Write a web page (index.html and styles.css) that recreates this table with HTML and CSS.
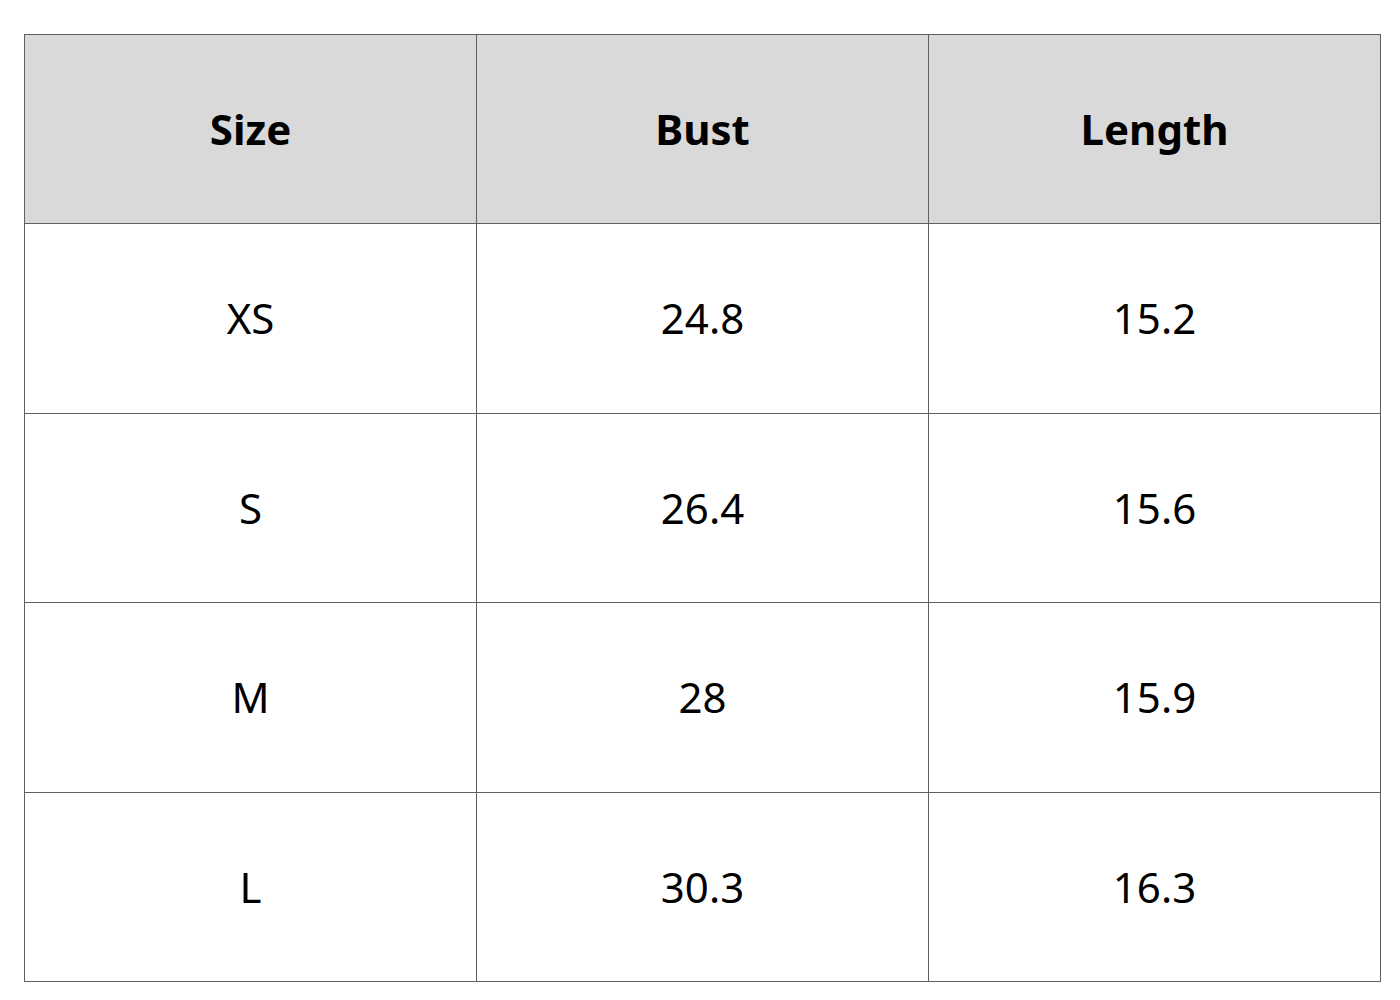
FILE: index.html
```html
<!DOCTYPE html>
<html>
<head>
<meta charset="utf-8">
<link rel="stylesheet" href="styles.css">
</head>
<body>
<table class="size-chart">
  <thead>
    <tr><th>Size</th><th>Bust</th><th>Length</th></tr>
  </thead>
  <tbody>
    <tr><td>XS</td><td>24.8</td><td>15.2</td></tr>
    <tr><td>S</td><td>26.4</td><td>15.6</td></tr>
    <tr><td>M</td><td>28</td><td>15.9</td></tr>
    <tr><td>L</td><td>30.3</td><td>16.3</td></tr>
  </tbody>
</table>
</body>
</html>
```

FILE: styles.css
```css
html, body {
  margin: 0;
  padding: 0;
  background: #ffffff;
}
body {
  padding: 34px 0 0 24px;
  font-family: "Noto Sans", "Liberation Sans", sans-serif;
  color: #000;
}
.size-chart {
  border-collapse: collapse;
  table-layout: fixed;
  width: 1357px;
}
.size-chart th,
.size-chart td {
  border: 1px solid #5f5f5f;
  width: 451px;
  height: 188.4px;
  padding: 0;
  text-align: center;
  vertical-align: middle;
  font-size: 42px;
  line-height: 1.2;
}
.size-chart th {
  background: #d9d9d9;
  font-weight: 700;
}
.size-chart td {
  font-weight: 400;
}
```
